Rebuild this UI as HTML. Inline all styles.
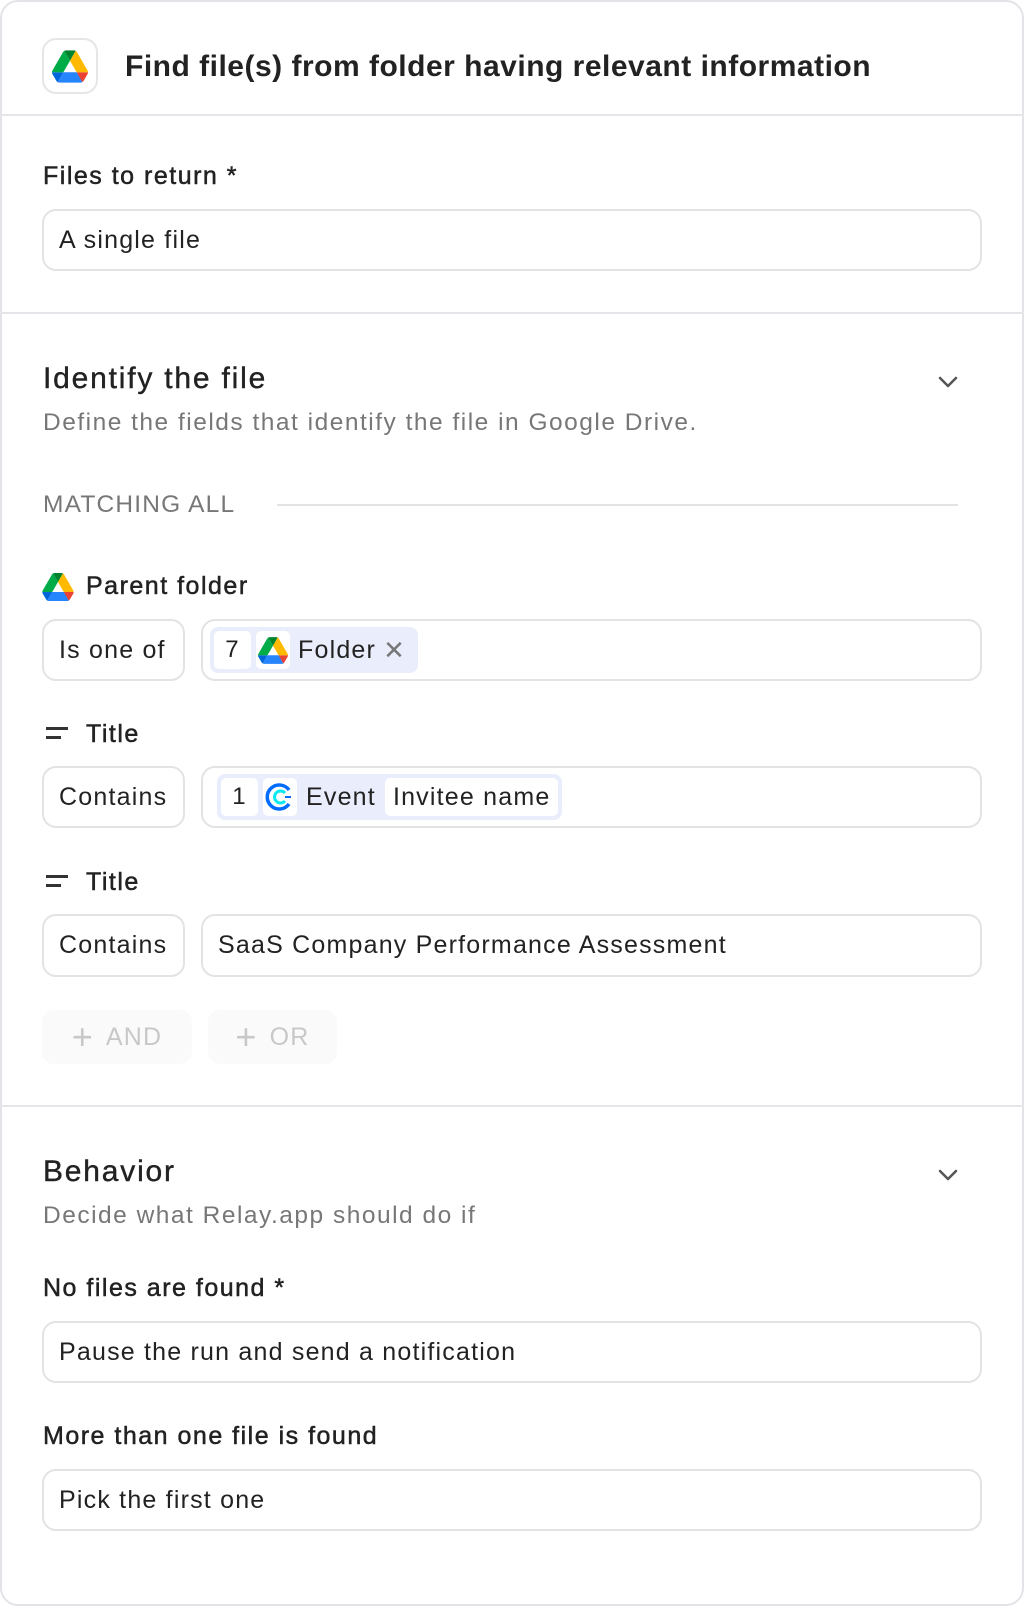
<!DOCTYPE html>
<html><head><meta charset="utf-8"><style>
*{box-sizing:border-box;margin:0;padding:0}
body{width:1024px;height:1606px;background:#fff;font-family:"Liberation Sans",sans-serif;color:#222;position:relative;overflow:hidden;letter-spacing:1.2px}
.card{position:absolute;left:0;top:0;width:1024px;height:1606px;border:2px solid #e3e3e8;border-radius:18px}
.abs{position:absolute}
.hr{position:absolute;left:0;width:1024px;height:2px;background:#e6e6ea}
.lbl{position:absolute;left:43px;font-size:25px;color:#222;line-height:30px;letter-spacing:1.5px;-webkit-text-stroke:0.5px #222}
.inp{position:absolute;border:2px solid #e3e3e6;border-radius:14px;font-size:25px;color:#222;display:flex;align-items:center;padding-left:15px}
.h2{position:absolute;left:43px;font-size:30px;color:#222;line-height:34px;letter-spacing:1.8px;-webkit-text-stroke:0.4px #222}
.sub{position:absolute;left:43px;font-size:24.5px;color:#777;line-height:30px;letter-spacing:1.5px}
.chev{position:absolute;left:937px;width:22px;height:14px}
.chip{display:inline-flex;align-items:center;height:46px;background:#eaedfc;border-radius:8px;padding:4px;gap:5px}
.cb{background:#fff;border-radius:5px;height:38px;display:flex;align-items:center;justify-content:center;font-size:24px}
.btn{position:absolute;top:1010px;height:54px;background:#fafafa;border-radius:12px;color:#c8c8c8;font-size:25px;display:flex;align-items:center;justify-content:center;gap:12px}
</style></head><body>
<div class="card"></div>
<svg width="0" height="0" style="position:absolute"><defs>
<g id="gd"><path d="M6.6 66.85l3.85 6.65c.8 1.4 1.950 2.5 3.3 3.3l13.75-23.8H0c0 1.55.4 3.1 1.2 4.5z" fill="#0066da"/><path d="M43.65 25L29.9 1.2c-1.35.8-2.5 1.9-3.3 3.3L1.2 48.5C.4 49.9 0 51.45 0 53h27.5z" fill="#00ac47"/><path d="M73.55 76.8c1.35-.8 2.5-1.9 3.3-3.3l1.6-2.75 7.650-13.25c.8-1.4 1.2-2.95 1.2-4.5H59.8l5.85 11.5z" fill="#ea4335"/><path d="M43.65 25L57.4 1.2C56.05.4 54.5 0 52.9 0H34.4c-1.6 0-3.15.45-4.5 1.2z" fill="#00832d"/><path d="M59.8 53H27.5L13.75 76.8c1.35.8 2.9 1.2 4.5 1.2h50.8c1.6 0 3.15-.45 4.5-1.2z" fill="#2684fc"/><path d="M73.4 26.5L60.7 4.5c-.8-1.4-1.95-2.5-3.3-3.3L43.65 25 59.8 53h27.45c0-1.55-.4-3.1-1.2-4.5z" fill="#ffba00"/></g>
</defs></svg>

<div class="abs" style="left:42px;top:38px;width:56px;height:56px;border:2px solid #e6e6e9;border-radius:14px;display:flex;align-items:center;justify-content:center"><svg width="36" height="33" viewBox="0 0 87.3 78"><use href="#gd"/></svg></div>
<div class="abs" style="left:125px;top:49px;font-size:30px;font-weight:bold;line-height:36px;color:#222;letter-spacing:0.5px">Find file(s) from folder having relevant information</div>
<div class="hr" style="top:114px"></div>

<div class="lbl" style="top:161px">Files to return *</div>
<div class="inp" style="left:42px;top:209px;width:940px;height:62px">A single file</div>
<div class="hr" style="top:312px"></div>

<div class="h2" style="top:362px">Identify the file</div>
<svg class="chev" style="top:375px" viewBox="0 0 22 14"><path d="M3 3l8 8 8-8" fill="none" stroke="#555" stroke-width="2.5" stroke-linecap="round" stroke-linejoin="round"/></svg>
<div class="sub" style="top:408px">Define the fields that identify the file in Google Drive.</div>
<div class="abs" style="left:43px;top:490px;font-size:24.5px;color:#777;line-height:30px;letter-spacing:1.2px">MATCHING ALL</div>
<div class="abs" style="left:277px;top:504px;width:681px;height:2px;background:#e3e3e6"></div>

<svg class="abs" style="left:42px;top:573px" width="32" height="28" viewBox="0 0 87.3 78"><use href="#gd"/></svg>
<div class="lbl" style="left:86px;top:571px">Parent folder</div>
<div class="inp" style="left:42px;top:619px;width:143px;height:62px">Is one of</div>
<div class="inp" style="left:201px;top:619px;width:781px;height:62px;padding-left:7px">
<div class="chip"><div class="cb" style="width:37px">7</div><div class="cb" style="width:34px"><svg width="30" height="27" viewBox="0 0 87.3 78"><use href="#gd"/></svg></div><span style="font-size:25px;margin-left:3px">Folder</span><span style="color:#777;font-size:26px;margin:0 8px 0 2px">✕</span></div></div>

<svg class="abs" style="left:46px;top:727px" width="24" height="14"><rect x="0" y="0" width="22" height="3" fill="#333"/><rect x="0" y="9" width="15" height="3" fill="#333"/></svg>
<div class="lbl" style="left:86px;top:719px">Title</div>
<div class="inp" style="left:42px;top:766px;width:143px;height:62px">Contains</div>
<div class="inp" style="left:201px;top:766px;width:781px;height:62px;padding-left:14px">
<div class="chip"><div class="cb" style="width:37px">1</div><div class="cb" style="width:34px"><svg width="30" height="30" viewBox="0 0 30 30"><path d="M24 8A12 12 0 1 0 24 22" fill="none" stroke="#006bff" stroke-width="3.5"/><path d="M20 11A6 6 0 1 0 20 19" fill="none" stroke="#0ae8f0" stroke-width="3"/><path d="M20 15h6" stroke="#006bff" stroke-width="2"/></svg></div><span style="font-size:25px;margin:0 4px 0 4px">Event</span><div class="cb" style="padding:0 8px;font-size:25px">Invitee name</div></div></div>

<svg class="abs" style="left:46px;top:875px" width="24" height="14"><rect x="0" y="0" width="22" height="3" fill="#333"/><rect x="0" y="9" width="15" height="3" fill="#333"/></svg>
<div class="lbl" style="left:86px;top:867px">Title</div>
<div class="inp" style="left:42px;top:914px;width:143px;height:63px">Contains</div>
<div class="inp" style="left:201px;top:914px;width:781px;height:63px">SaaS Company Performance Assessment</div>

<div class="btn" style="left:42px;width:150px"><span style="font-size:36px;font-weight:300;line-height:1">+</span>AND</div>
<div class="btn" style="left:208px;width:129px"><span style="font-size:36px;font-weight:300;line-height:1">+</span>OR</div>
<div class="hr" style="top:1105px"></div>

<div class="h2" style="top:1155px">Behavior</div>
<svg class="chev" style="top:1168px" viewBox="0 0 22 14"><path d="M3 3l8 8 8-8" fill="none" stroke="#555" stroke-width="2.5" stroke-linecap="round" stroke-linejoin="round"/></svg>
<div class="sub" style="top:1201px">Decide what Relay.app should do if</div>
<div class="lbl" style="top:1273px">No files are found *</div>
<div class="inp" style="left:42px;top:1321px;width:940px;height:62px">Pause the run and send a notification</div>
<div class="lbl" style="top:1421px">More than one file is found</div>
<div class="inp" style="left:42px;top:1469px;width:940px;height:62px">Pick the first one</div>
</body></html>
